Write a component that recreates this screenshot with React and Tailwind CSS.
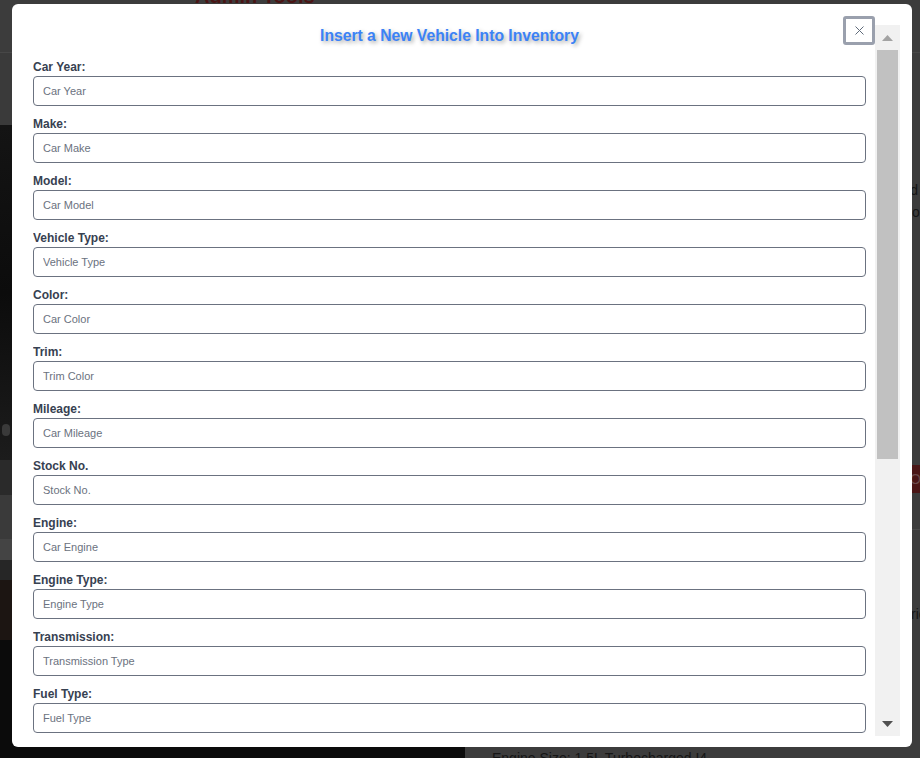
import React from "react";

const fields = [
  ["Car Year:", "Car Year"],
  ["Make:", "Car Make"],
  ["Model:", "Car Model"],
  ["Vehicle Type:", "Vehicle Type"],
  ["Color:", "Car Color"],
  ["Trim:", "Trim Color"],
  ["Mileage:", "Car Mileage"],
  ["Stock No.", "Stock No."],
  ["Engine:", "Car Engine"],
  ["Engine Type:", "Engine Type"],
  ["Transmission:", "Transmission Type"],
  ["Fuel Type:", "Fuel Type"],
  ["Drivetrain:", "Drivetrain"],
  ["Price:", "Car Price"],
];

function Background() {
  return (
    <div className="flex flex-col w-full h-full">
      <div className="h-[53px] shrink-0 border-b border-[#474747] pl-[195px] overflow-hidden">
        <div className="-mt-[19px] text-[20px] font-bold text-[#4a1414] whitespace-nowrap">Admin Tools</div>
      </div>
      <div className="flex flex-1 min-h-0 overflow-hidden">
        <div className="w-[465px] shrink-0 flex flex-col">
          <div className="h-[72px] shrink-0 bg-[#3a3a3a]" />
          <div className="h-[335px] shrink-0 bg-gradient-to-b from-[#141414] via-[#0c0c0c] to-[#1c1c1c] flex items-end pb-[24px] pl-[2px]">
            <div className="w-[8px] h-[12px] rounded-full bg-[#3a3a3a]" />
          </div>
          <div className="h-[35px] shrink-0 bg-[#2a2a2a]" />
          <div className="h-[45px] shrink-0 bg-[#3a3a3a] border-b border-[#444]" />
          <div className="h-[20px] shrink-0 bg-[#444]" />
          <div className="h-[20px] shrink-0 bg-[#262626]" />
          <div className="h-[60px] shrink-0 bg-[#1c1512]" />
          <div className="flex-1 bg-[#0b0b0b]" />
        </div>
        <div className="flex-1 flex flex-col pl-[27px] text-[14px] text-[#151515] overflow-hidden whitespace-nowrap">
          <div className="h-[126px] shrink-0" />
          <div className="leading-[22px] shrink-0 text-right pr-[2px]">Vehicle features and</div>
          <div className="leading-[22px] shrink-0 pl-[420px]">options</div>
          <div className="h-[242px] shrink-0" />
          <div className="h-[28px] shrink-0 bg-[#4a1616] text-[#6a4a4a] leading-[28px] pl-[418px]">Order</div>
          <div className="h-[37px] shrink-0 border-b border-[#4a4a4a]" />
          <div className="h-[73px] shrink-0" />
          <div className="leading-[22px] shrink-0 pl-[419px]">rice</div>
          <div className="h-[124px] shrink-0" />
          <div className="leading-[18px] shrink-0">Engine Size: 1.5L Turbocharged I4</div>
        </div>
      </div>
    </div>
  );
}

function Scrollbar() {
  return (
    <div className="w-[25px] bg-[#f1f1f1] flex flex-col">
      <div className="h-[25px] flex items-center justify-center">
        <svg width="11" height="6" viewBox="0 0 11 6"><polygon points="5.5,0 11,6 0,6" fill="#a3a3a3" /></svg>
      </div>
      <div className="h-[409px] mx-[2px] bg-[#c1c1c1]" />
      <div className="flex-1" />
      <div className="h-[25px] flex items-center justify-center">
        <svg width="11" height="6" viewBox="0 0 11 6"><polygon points="0,0 11,0 5.5,6" fill="#505050" /></svg>
      </div>
    </div>
  );
}

export default function App() {
  return (
    <div className="relative w-[920px] h-[758px] overflow-hidden bg-[#3c3c3c] font-['Liberation_Sans',Arial,sans-serif]">
      <Background />
      <div className="absolute left-[12px] top-[4px] w-[900px] h-[743px] bg-white rounded-[6px] pt-[21px] pb-[11px] pl-[21px] pr-[12px] flex gap-[9px]">
        <div className="flex-1 overflow-hidden flex flex-col">
          <h2 className="text-center text-[15.7px] leading-[22px] font-bold text-[#3b82f6] [text-shadow:2px_2px_4px_rgba(0,0,0,0.35)] mb-[13px] shrink-0">
            Insert a New Vehicle Into Inventory
          </h2>
          {fields.map(([label, ph]) => (
            <div key={label} className="flex flex-col shrink-0 mb-[11px]">
              <label className="text-[12px] leading-[14px] font-bold text-[#374151] mb-[2px]">{label}</label>
              <input
                type="text"
                placeholder={ph}
                className="h-[30px] w-full border border-[#6b7280] rounded-[4px] px-[9px] text-[11px] text-[#374151] placeholder:text-[#6b7280] outline-none bg-white"
              />
            </div>
          ))}
        </div>
        <Scrollbar />
        <button className="absolute left-[831px] top-[12px] w-[32px] h-[29px] border-[3px] border-[#9aa0ad] rounded-[3px] bg-white flex items-center justify-center">
          <svg width="9" height="9" viewBox="0 0 9 9">
            <path d="M0.5 0.5 L8.5 8.5 M8.5 0.5 L0.5 8.5" stroke="#5f6b7a" strokeWidth="1" />
          </svg>
        </button>
      </div>
    </div>
  );
}
